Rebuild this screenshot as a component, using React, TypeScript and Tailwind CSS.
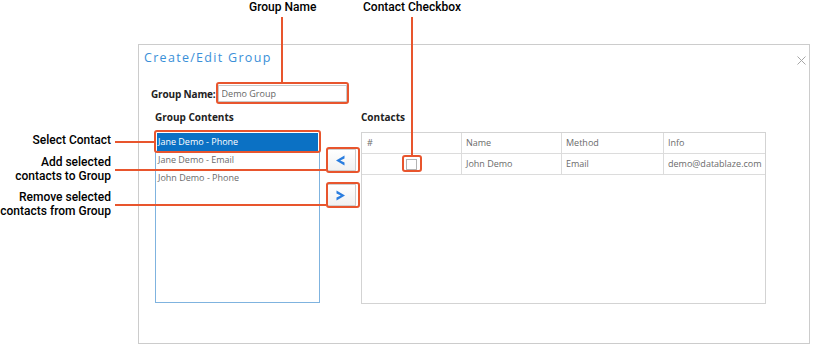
import React from 'react';

const contents = ['Jane Demo - Phone', 'Jane Demo - Email', 'John Demo - Phone'];

function Chevron({ dir }: { dir: 'left' | 'right' }) {
  return (
    <svg width="11" height="11" viewBox="0 0 11 11" className={dir === 'right' ? 'rotate-180' : ''}>
      <path d="M9.5 0.5 L1 5.5 L9.5 10.5 L9.5 7.6 L5.2 5.5 L9.5 3.4 Z" fill="#2a7ddf" />
    </svg>
  );
}

function ArrowButton({ dir }: { dir: 'left' | 'right' }) {
  return (
    <button className="flex h-[22px] w-[30px] items-center justify-center border border-[#cfcfcf] bg-gradient-to-b from-white to-[#f1f1f1]">
      <Chevron dir={dir} />
    </button>
  );
}

function Callouts() {
  const orange = 'border-[#e8552d]';
  return (
    <div className="pointer-events-none absolute inset-0 font-['Roboto'] text-[12px] font-medium leading-[14px] text-black">
      {/* top labels */}
      <div className="absolute left-[249px] top-[0px]">Group Name</div>
      <div className="absolute left-[281px] top-[17px] h-[65px] w-[2px] bg-[#e8552d]" />
      <div className="absolute left-[363px] top-[0px]">Contact Checkbox</div>
      <div className="absolute left-[411px] top-[17px] h-[138px] w-[2px] bg-[#e8552d]" />

      {/* left labels */}
      <div className="absolute right-[702px] top-[133px] text-right">Select Contact</div>
      <div className="absolute left-[115px] top-[141px] h-[2px] w-[39px] bg-[#e8552d]" />
      <div className="absolute right-[702px] top-[155px] text-right">
        Add selected
        <br />
        contacts to Group
      </div>
      <div className="absolute left-[115px] top-[169px] h-[2px] w-[211px] bg-[#e8552d]" />
      <div className="absolute right-[702px] top-[190px] text-right">
        Remove selected
        <br />
        contacts from Group
      </div>
      <div className="absolute left-[115px] top-[204px] h-[2px] w-[211px] bg-[#e8552d]" />

      {/* highlight boxes */}
      <div className={`absolute left-[216px] top-[82px] h-[22px] w-[133px] rounded-[3px] border-2 ${orange}`} />
      <div className={`absolute left-[154px] top-[130px] h-[23px] w-[167px] rounded-[3px] border-2 ${orange}`} />
      <div className={`absolute left-[326px] top-[147px] h-[26px] w-[34px] rounded-[3px] border-2 ${orange}`} />
      <div className={`absolute left-[326px] top-[182px] h-[26px] w-[34px] rounded-[3px] border-2 ${orange}`} />
      <div className={`absolute left-[402px] top-[155px] h-[17px] w-[20px] rounded-[3px] border-2 ${orange}`} />
    </div>
  );
}

export default function App() {
  return (
    <div className="relative h-[344px] w-[813px] overflow-hidden bg-white font-['Open_Sans',sans-serif]">
      <div className="ml-[138px] mt-[44px] h-[300px] w-[672px] border border-[#cccccc] bg-white">
        {/* title */}
        <div className="flex items-start justify-between pl-[5px] pr-[3px] pt-[5px]">
          <h2 className="text-[12.5px] leading-[16px] tracking-[1.3px] text-[#3a8fd8]">Create/Edit Group</h2>
          <svg width="9" height="9" viewBox="0 0 9 9" className="mt-[6px]">
            <path d="M0.5 0.5 L8.5 8.5 M8.5 0.5 L0.5 8.5" stroke="#a6a6a6" strokeWidth="1" />
          </svg>
        </div>

        {/* group name */}
        <div className="mt-[19px] flex items-center pl-[12px]">
          <label className="text-[10px] font-bold leading-[14px] tracking-[-0.15px] text-[#222]">Group Name:</label>
          <input
            readOnly
            value="Demo Group"
            className="ml-[2px] h-[17px] w-[129px] border border-[#c9c9c9] px-[3px] text-[9px] text-[#666] outline-none"
          />
        </div>

        {/* section labels */}
        <div className="mt-[8px] flex pl-[16px] text-[10px] font-bold leading-[14px] text-[#222]">
          <div className="w-[206px]">Group Contents</div>
          <div>Contacts</div>
        </div>

        {/* main row */}
        <div className="mt-[7px] flex pl-[16px]">
          <ul className="h-[172px] w-[165px] border border-[#7fb3df] p-[1px] text-[9px] leading-[18px] text-[#6b6b6b]">
            {contents.map((c, i) => (
              <li key={c} className={`h-[18px] pl-[1px] ${i === 0 ? 'bg-[#0b71c4] text-white' : ''}`}>
                {c}
              </li>
            ))}
          </ul>

          <div className="flex w-[41px] flex-col items-center gap-[13px] pt-[18px]">
            <ArrowButton dir="left" />
            <ArrowButton dir="right" />
          </div>

          <div className="mt-[1px] h-[172px] w-[405px] border border-[#d3d3d3] text-[9px] text-[#6b6b6b]">
            <div className="grid h-[21px] grid-cols-[100px_100px_102px_1fr] border-b border-[#dcdcdc]">
              <div className="flex items-center border-r border-[#dcdcdc] pl-[5px]">#</div>
              <div className="flex items-center border-r border-[#dcdcdc] pl-[4px]">Name</div>
              <div className="flex items-center border-r border-[#dcdcdc] pl-[4px]">Method</div>
              <div className="flex items-center pl-[4px]">Info</div>
            </div>
            <div className="grid h-[21px] grid-cols-[100px_100px_102px_1fr] border-b border-[#dcdcdc]">
              <div className="flex items-center justify-center border-r border-[#dcdcdc]">
                <span className="block h-[11px] w-[11px] border border-[#b3b3b3] bg-white" />
              </div>
              <div className="flex items-center border-r border-[#dcdcdc] pl-[4px]">John Demo</div>
              <div className="flex items-center border-r border-[#dcdcdc] pl-[4px]">Email</div>
              <div className="flex items-center pl-[4px]">demo@datablaze.com</div>
            </div>
          </div>
        </div>
      </div>
      <Callouts />
    </div>
  );
}
